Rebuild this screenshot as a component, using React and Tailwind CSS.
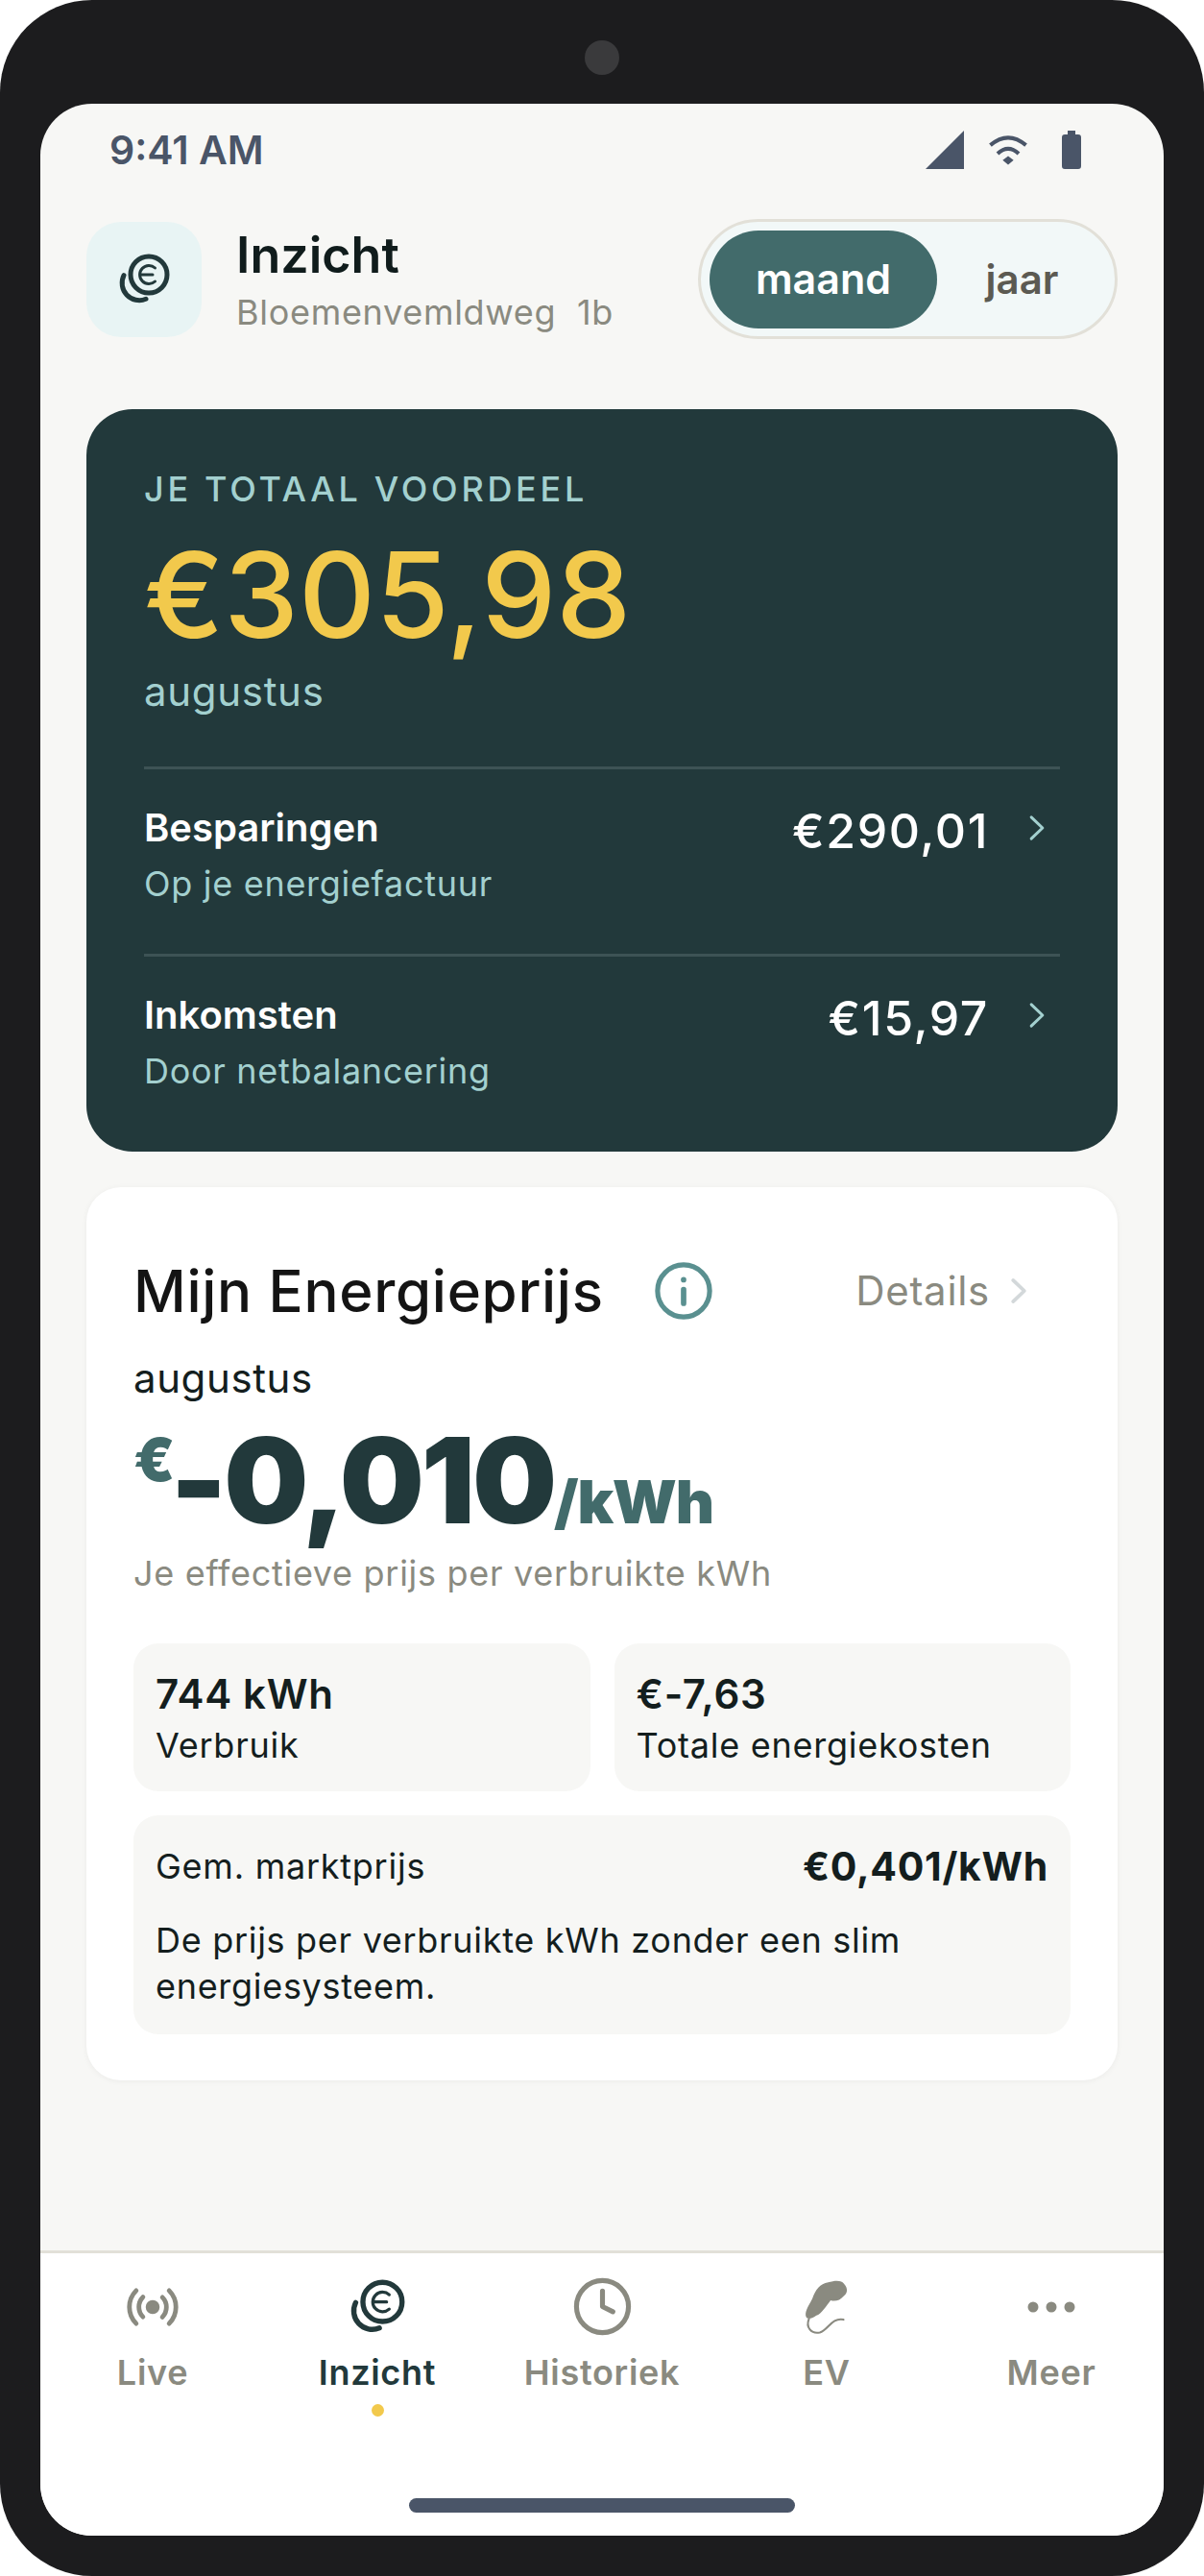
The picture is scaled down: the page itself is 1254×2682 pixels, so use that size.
import React from "react";

function Coins({ size = 54, color = "#22393b" }) {
  return (
    <svg width={size} height={size} viewBox="0 0 54 54" fill="none" stroke={color} strokeLinecap="round">
      <circle cx="32" cy="22" r="19" strokeWidth="5" />
      <path d="M6 22.7A18 18 0 0 0 29 47.3" strokeWidth="5" />
      <path d="M38.5 15A9.5 9.5 0 1 0 38.5 29" strokeWidth="3" />
      <path d="M24 22H36" strokeWidth="3" />
    </svg>
  );
}

function Chevron({ color = "#a3d0cf", size = 24, width = 3 }) {
  return (
    <svg width={size} height={size} viewBox="0 0 24 24" fill="none" stroke={color} strokeWidth={width} strokeLinecap="round" strokeLinejoin="round">
      <path d="M7 2.5l10 9.5-10 9.5" />
    </svg>
  );
}

function Radio() {
  return (
    <svg width="58" height="58" viewBox="0 0 24 24" fill="none" stroke="#8a8a80" strokeWidth="2" strokeLinecap="round" strokeLinejoin="round">
      <path d="M4.9 19.1C1 15.2 1 8.8 4.9 4.9" />
      <path d="M7.8 16.2c-2.3-2.3-2.3-6.1 0-8.5" />
      <circle cx="12" cy="12" r="2" fill="#8a8a80" />
      <path d="M16.2 7.8c2.3 2.3 2.3 6.1 0 8.5" />
      <path d="M19.1 4.9C23 8.8 23 15.2 19.1 19.1" />
    </svg>
  );
}

function Clock() {
  return (
    <svg width="65" height="65" viewBox="0 0 24 24" fill="none" stroke="#8a8a80" strokeWidth="1.9" strokeLinecap="round" strokeLinejoin="round">
      <circle cx="12" cy="12" r="10" />
      <path d="M12 6v6l4 2" />
    </svg>
  );
}

function Plug() {
  return (
    <svg className="mr-[3px]" width="48" height="60" viewBox="830 75 135 170" fill="none">
      <path d="M840 190C834 175 845 160 858 135C868 108 880 92 905 87C925 81 945 80 952 92C964 105 962 120 950 128C940 140 925 145 912 140C900 155 885 180 870 185C855 195 845 197 840 190Z" fill="#8a8a80" />
      <path d="M848 195C838 220 855 240 880 235C905 228 915 190 950 197" stroke="#8a8a80" strokeWidth="6" strokeLinecap="round" />
    </svg>
  );
}

function Dots() {
  return (
    <svg width="50" height="14" viewBox="0 0 50 14" fill="#8a8a80">
      <circle cx="6" cy="7" r="5.5" />
      <circle cx="25" cy="7" r="5.5" />
      <circle cx="44" cy="7" r="5.5" />
    </svg>
  );
}

function NavItem({ icon, label, active }) {
  return (
    <div className="flex flex-col items-center">
      <div className="flex h-[65px] items-center justify-center">{icon}</div>
      <div className={`mt-[13px] text-[36px] leading-[46px] font-semibold tracking-[0.7px] ${active ? "text-[#22393b]" : "text-[#8a8a80]"}`}>{label}</div>
      {active ? <div className="mt-[10px] h-[13px] w-[13px] rounded-full bg-[#f2c94c]" /> : null}
    </div>
  );
}

function HeroRow({ title, sub, value }) {
  return (
    <div className="flex items-start justify-between">
      <div>
        <div className="text-[40px] leading-[50px] font-semibold text-white">{title}</div>
        <div className="mt-[8px] text-[36px] leading-[50px] tracking-[0.7px] text-[#a3d0cf]">{sub}</div>
      </div>
      <div className="flex items-center">
        <div className="mt-[3px] text-[50px] leading-[50px] font-medium tracking-[1.6px] text-white">{value}</div>
        <div className="mr-[10px] ml-[36px] -translate-y-[2px]"><Chevron size={28} width={2.6} /></div>
      </div>
    </div>
  );
}

export default function App() {
  return (
    <div className="h-[2682px] w-[1254px] bg-white [font-family:Inter,sans-serif]">
      <div className="flex h-full flex-col rounded-[96px] bg-[#1c1c1e] px-[42px] pb-[42px]">
        <div className="mx-auto mt-[42px] mb-[30px] h-[36px] w-[36px] shrink-0 rounded-full bg-[#3a3a3c]" />
        <div className="flex flex-1 flex-col overflow-hidden rounded-[54px] bg-[#f7f7f5]">
          <div className="flex items-center justify-between pt-[28px] pr-[86px] pl-[72px]">
            <div className="text-[41px] leading-[40px] font-semibold text-[#4a5568]">9:41 AM</div>
            <div className="flex items-center">
              <svg width="40" height="40" viewBox="0 0 40 40" fill="#4a5568"><path d="M0 40L40 0V40Z" /></svg>
              <svg className="ml-[24px]" width="44" height="38" viewBox="260 85 140 105" fill="none">
                <path d="M271 122Q330 72 389 122" stroke="#4a5568" strokeWidth="13" />
                <path d="M295 150Q330 118 365 150" stroke="#4a5568" strokeWidth="13" />
                <path d="M312 172L330 158L348 172L330 187Z" fill="#4a5568" />
              </svg>
              <svg className="ml-[34px]" width="20" height="40" viewBox="0 0 20 40" fill="#4a5568">
                <path d="M6 0H14V4H17Q20 4 20 7V37Q20 40 17 40H3Q0 40 0 37V7Q0 4 3 4H6Z" />
              </svg>
            </div>
          </div>

          <div className="flex-1 px-[48px]">
            <div className="mt-[52px] flex h-[125px] items-center justify-between">
              <div className="flex items-center">
                <div className="flex h-[120px] w-[120px] items-center justify-center rounded-[36px] bg-[#e8f4f4]"><Coins /></div>
                <div className="ml-[36px]">
                  <div className="-mt-[2px] text-[52px] leading-[68px] font-semibold text-[#101c1c]">Inzicht</div>
                  <div className="mt-[2px] text-[36px] leading-[46px] tracking-[0.7px] whitespace-pre text-[#8a8a80]">Bloemenvemldweg  1b</div>
                </div>
              </div>
              <div className="flex h-[125px] w-[437px] items-center rounded-full border-[3px] border-[#e2e0d8] bg-[#f2f8f8] pl-[9px]">
                <div className="flex h-[102px] w-[237px] items-center justify-center rounded-full bg-[#426b6b] text-[43px] font-semibold text-white">maand</div>
                <div className="flex-1 pr-[8px] text-center text-[42px] font-semibold text-[#5c5a52]">jaar</div>
              </div>
            </div>

            <div className="mt-[73px] h-[773px] rounded-[48px] bg-[#22393b] px-[60px] pt-[60px]">
              <div className="text-[36px] leading-[46px] font-medium tracking-[3.7px] text-[#a3d0cf]">JE TOTAAL VOORDEEL</div>
              <div className="mt-[25px] text-[124px] leading-[124px] font-medium text-[#f2c94c]">€305,98</div>
              <div className="mt-[14px] text-[42px] leading-[50px] tracking-[0.7px] text-[#a3d0cf]">augustus</div>
              <div className="mt-[53px] h-[3px] bg-[#3d5355]" />
              <div className="pt-[36px] pb-[48px]">
                <HeroRow title="Besparingen" sub="Op je energiefactuur" value="€290,01" />
              </div>
              <div className="h-[3px] bg-[#3d5355]" />
              <div className="pt-[36px]">
                <HeroRow title="Inkomsten" sub="Door netbalancering" value="€15,97" />
              </div>
            </div>

            <div className="mt-[37px] h-[930px] rounded-[36px] bg-white px-[49px] pt-[73px] shadow-[0_1px_6px_rgba(0,0,0,0.05)]">
              <div className="flex h-[70px] items-center">
                <div className="text-[60px] leading-[70px] font-medium tracking-[0.7px] text-[#141414]">Mijn Energieprijs</div>
                <svg className="ml-[52px]" width="62" height="62" viewBox="0 0 24 24" fill="none" stroke="#5a9090" strokeWidth="2" strokeLinecap="round">
                  <circle cx="12" cy="12" r="10.5" />
                  <path d="M12 11.5v5.5" strokeWidth="2.2" />
                  <circle cx="12" cy="7.5" r="1.1" fill="#5a9090" stroke="none" />
                </svg>
                <div className="mr-[40px] ml-auto flex items-center">
                  <span className="text-[42px] leading-[50px] tracking-[0.7px] text-[#8a8a80]">Details</span>
                  <span className="ml-[16px]"><Chevron color="#d3d8da" size={28} width={3.2} /></span>
                </div>
              </div>
              <div className="mt-[31px] text-[42px] leading-[50px] tracking-[0.6px] text-[#141e1e]">augustus</div>
              <div className="mt-[19px] flex items-baseline">
                <span className="mt-[10px] self-start text-[62px] leading-[62px] font-black tracking-[-5px] text-[#426b6b]">€</span>
                <span className="text-[124px] leading-[124px] font-black tracking-[-3px] text-[#22393b]">-0,010</span>
                <span className="text-[62px] leading-[62px] font-black tracking-[-1.2px] text-[#426b6b]">/kWh</span>
              </div>
              <div className="mt-[12px] text-[36px] leading-[46px] tracking-[0.7px] text-[#8a8a80]">Je effectieve prijs per verbruikte kWh</div>

              <div className="mt-[50px] grid grid-cols-2 gap-[25px]">
                <div className="h-[154px] rounded-[26px] bg-[#f7f7f5] px-[23px] pt-[30px]">
                  <div className="text-[42px] leading-[46px] font-semibold tracking-[0.7px] text-[#141e1e]">744 kWh</div>
                  <div className="mt-[7px] text-[36px] leading-[46px] tracking-[0.75px] text-[#141e1e]">Verbruik</div>
                </div>
                <div className="h-[154px] rounded-[26px] bg-[#f7f7f5] px-[23px] pt-[30px]">
                  <div className="text-[42px] leading-[46px] font-semibold tracking-[0.7px] text-[#141e1e]">€-7,63</div>
                  <div className="mt-[7px] text-[36px] leading-[46px] tracking-[0.75px] text-[#141e1e]">Totale energiekosten</div>
                </div>
                <div className="col-span-2 h-[228px] rounded-[26px] bg-[#f7f7f5] px-[23px] pt-[30px]">
                  <div className="flex items-center justify-between">
                    <div className="text-[36px] leading-[46px] tracking-[0.75px] text-[#141e1e]">Gem. marktprijs</div>
                    <div className="text-[41px] leading-[46px] font-bold tracking-[0.7px] text-[#141e1e]">€0,401/kWh</div>
                  </div>
                  <div className="mt-[30px] text-[36px] leading-[48px] tracking-[0.7px] text-[#141e1e]">De prijs per verbruikte kWh zonder een slim energiesysteem.</div>
                </div>
              </div>
            </div>
          </div>

          <div className="flex h-[297px] flex-col border-t-[3px] border-[#e2e0d8] bg-white">
            <div className="grid grid-cols-5 pt-[23px]">
              <NavItem icon={<Radio />} label="Live" />
              <NavItem icon={<Coins size={58} />} label="Inzicht" active />
              <NavItem icon={<Clock />} label="Historiek" />
              <NavItem icon={<Plug />} label="EV" />
              <NavItem icon={<Dots />} label="Meer" />
            </div>
            <div className="mt-auto mb-[24px] h-[15px] w-[402px] self-center rounded-full bg-[#4a5568]" />
          </div>
        </div>
      </div>
    </div>
  );
}
